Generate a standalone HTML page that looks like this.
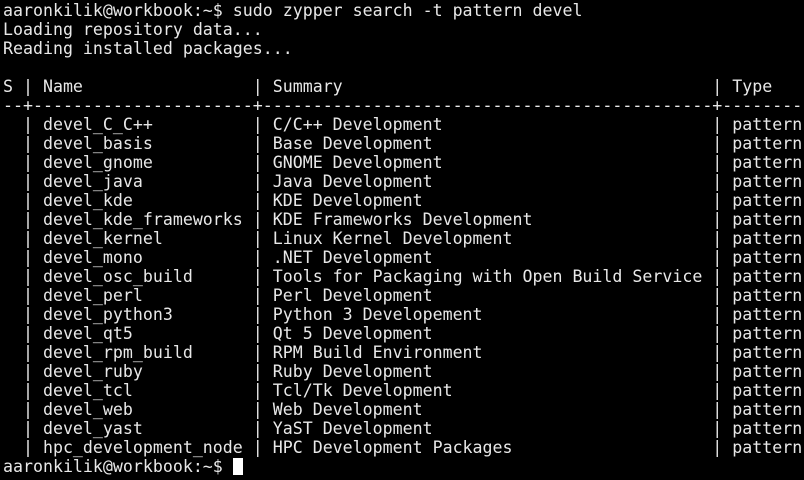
<!DOCTYPE html>
<html><head><meta charset="utf-8"><style>
html,body{margin:0;padding:0;background:#000;width:804px;height:480px;overflow:hidden}
pre{margin:0;position:absolute;left:3px;top:1px;color:#e8e8e8;font-family:"DejaVu Sans Mono","Liberation Mono",monospace;font-size:16.6px;line-height:19px;white-space:pre}
.cur{display:inline-block;width:10px;height:17px;background:#fff;vertical-align:-3px}
</style></head><body><pre>aaronkilik@workbook:~$ sudo zypper search -t pattern devel
Loading repository data...
Reading installed packages...

S | Name                 | Summary                                     | Type
--+----------------------+---------------------------------------------+--------
  | devel_C_C++          | C/C++ Development                           | pattern
  | devel_basis          | Base Development                            | pattern
  | devel_gnome          | GNOME Development                           | pattern
  | devel_java           | Java Development                            | pattern
  | devel_kde            | KDE Development                             | pattern
  | devel_kde_frameworks | KDE Frameworks Development                  | pattern
  | devel_kernel         | Linux Kernel Development                    | pattern
  | devel_mono           | .NET Development                            | pattern
  | devel_osc_build      | Tools for Packaging with Open Build Service | pattern
  | devel_perl           | Perl Development                            | pattern
  | devel_python3        | Python 3 Developement                       | pattern
  | devel_qt5            | Qt 5 Development                            | pattern
  | devel_rpm_build      | RPM Build Environment                       | pattern
  | devel_ruby           | Ruby Development                            | pattern
  | devel_tcl            | Tcl/Tk Development                          | pattern
  | devel_web            | Web Development                             | pattern
  | devel_yast           | YaST Development                            | pattern
  | hpc_development_node | HPC Development Packages                    | pattern
aaronkilik@workbook:~$ <span class="cur"></span></pre></body></html>
